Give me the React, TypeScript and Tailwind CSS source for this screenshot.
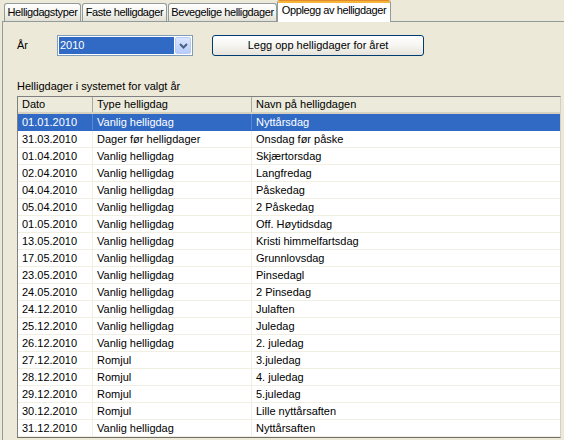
import React from "react";

const rows: [string, string, string][] = [
  ["01.01.2010", "Vanlig helligdag", "Nyttårsdag"],
  ["31.03.2010", "Dager før helligdager", "Onsdag før påske"],
  ["01.04.2010", "Vanlig helligdag", "Skjærtorsdag"],
  ["02.04.2010", "Vanlig helligdag", "Langfredag"],
  ["04.04.2010", "Vanlig helligdag", "Påskedag"],
  ["05.04.2010", "Vanlig helligdag", "2 Påskedag"],
  ["01.05.2010", "Vanlig helligdag", "Off. Høytidsdag"],
  ["13.05.2010", "Vanlig helligdag", "Kristi himmelfartsdag"],
  ["17.05.2010", "Vanlig helligdag", "Grunnlovsdag"],
  ["23.05.2010", "Vanlig helligdag", "Pinsedagl"],
  ["24.05.2010", "Vanlig helligdag", "2 Pinsedag"],
  ["24.12.2010", "Vanlig helligdag", "Julaften"],
  ["25.12.2010", "Vanlig helligdag", "Juledag"],
  ["26.12.2010", "Vanlig helligdag", "2. juledag"],
  ["27.12.2010", "Romjul", "3.juledag"],
  ["28.12.2010", "Romjul", "4. juledag"],
  ["29.12.2010", "Romjul", "5.juledag"],
  ["30.12.2010", "Romjul", "Lille nyttårsaften"],
  ["31.12.2010", "Vanlig helligdag", "Nyttårsaften"],
];

function Tab({ label, w, first }: { label: string; w: string; first?: boolean }) {
  return (
    <div
      className={`${w} ${first ? "" : "ml-[1px]"} h-[18px] border border-b-0 border-[#919b9c] rounded-t-[3px] bg-gradient-to-b from-white via-[#f3f3ef] to-[#e3e0d4] flex items-center justify-center leading-none whitespace-nowrap tracking-[-0.4px]`}
    >
      {label}
    </div>
  );
}

export default function App() {
  return (
    <div
      className="w-[564px] h-[440px] overflow-hidden bg-[#ece9d8] text-[11px] text-black flex flex-col"
      style={{ fontFamily: '"Liberation Sans", Arial, sans-serif' }}
    >
      {/* Tab strip */}
      <div className="h-[21px] flex items-end pl-[4px] shrink-0">
        <Tab label="Helligdagstyper" w="w-[77px]" first />
        <Tab label="Faste helligdager" w="w-[85px]" />
        <Tab label="Bevegelige helligdager" w="w-[109px]" />
        <div className="relative z-10 -mb-px w-[114px] h-[22px] bg-white border-x border-[#919b9c] rounded-t-[3px] overflow-hidden flex flex-col">
          <div className="h-[3px] bg-[#f7b43b] border-t border-[#e68b2c] shrink-0" />
          <div className="flex-1 flex items-start justify-center pt-[2px] leading-none whitespace-nowrap tracking-[-0.4px]">
            Opplegg av helligdager
          </div>
        </div>
      </div>

      {/* Panel */}
      <div className="ml-[2px] flex-1 border-l border-t border-[#919b9c] bg-[#ece9d8] pl-[14px] flex flex-col">
        <div className="mt-[12px] h-[22px] flex items-center">
          <div className="w-[40px]">År</div>
          <div className="w-[136px] h-[21px] mt-[1px] border border-[#7f9db9] bg-white flex p-[1px]">
            <div className="flex-1 bg-[#316ac5] text-white flex items-center pl-[1px]">2010</div>
            <div className="w-[16px] ml-[1px] rounded-[2px] border border-[#b9cbf3] bg-gradient-to-b from-[#dae6fe] to-[#b6cdfb] flex items-center justify-center">
              <svg width="9" height="6" viewBox="0 0 9 6">
                <path d="M1 1 L4.5 4.5 L8 1" fill="none" stroke="#4d6185" strokeWidth="2" />
              </svg>
            </div>
          </div>
          <div className="ml-[19px] w-[212px] h-[21px] border border-[#003c74] rounded-[3px] bg-gradient-to-b from-white via-[#f6f5f1] to-[#e6e3da] flex items-center justify-center">
            Legg opp helligdager for året
          </div>
        </div>

        <div className="mt-[24px] h-[13px] leading-[13px]">Helligdager i systemet for valgt år</div>

        <div className="mt-[3px] w-[544px] h-[342px] border border-t-[#7f7f7f] border-l-[#7f7f7f] border-r-[#d4d0c8] border-b-[#716f64] bg-white flex flex-col overflow-hidden">
          <div className="h-[17px] shrink-0 flex bg-[#ebeadb] border-b-2 border-[#d6d2c2] leading-none">
            <div className="w-[75px] border-r border-[#aca899] pl-[4px] flex items-center">Dato</div>
            <div className="w-[159px] border-r border-[#aca899] pl-[4px] flex items-center">Type helligdag</div>
            <div className="flex-1 pl-[4px] flex items-center">Navn på helligdagen</div>
          </div>
          {rows.map((r, i) => {
            const sel = i === 0;
            return (
              <div
                key={i}
                className={`h-[17px] shrink-0 flex border-b leading-none ${
                  sel ? "bg-[#316ac5] text-white border-[#316ac5]" : "border-[#f1efe2]"
                }`}
              >
                <div className={`w-[75px] border-r pl-[4px] flex items-center ${sel ? "border-[#5a88d3]" : "border-[#f1efe2]"}`}>{r[0]}</div>
                <div className={`w-[159px] border-r pl-[4px] flex items-center ${sel ? "border-[#5a88d3]" : "border-[#f1efe2]"}`}>{r[1]}</div>
                <div className="flex-1 pl-[4px] flex items-center">{r[2]}</div>
              </div>
            );
          })}
        </div>
      </div>
    </div>
  );
}
